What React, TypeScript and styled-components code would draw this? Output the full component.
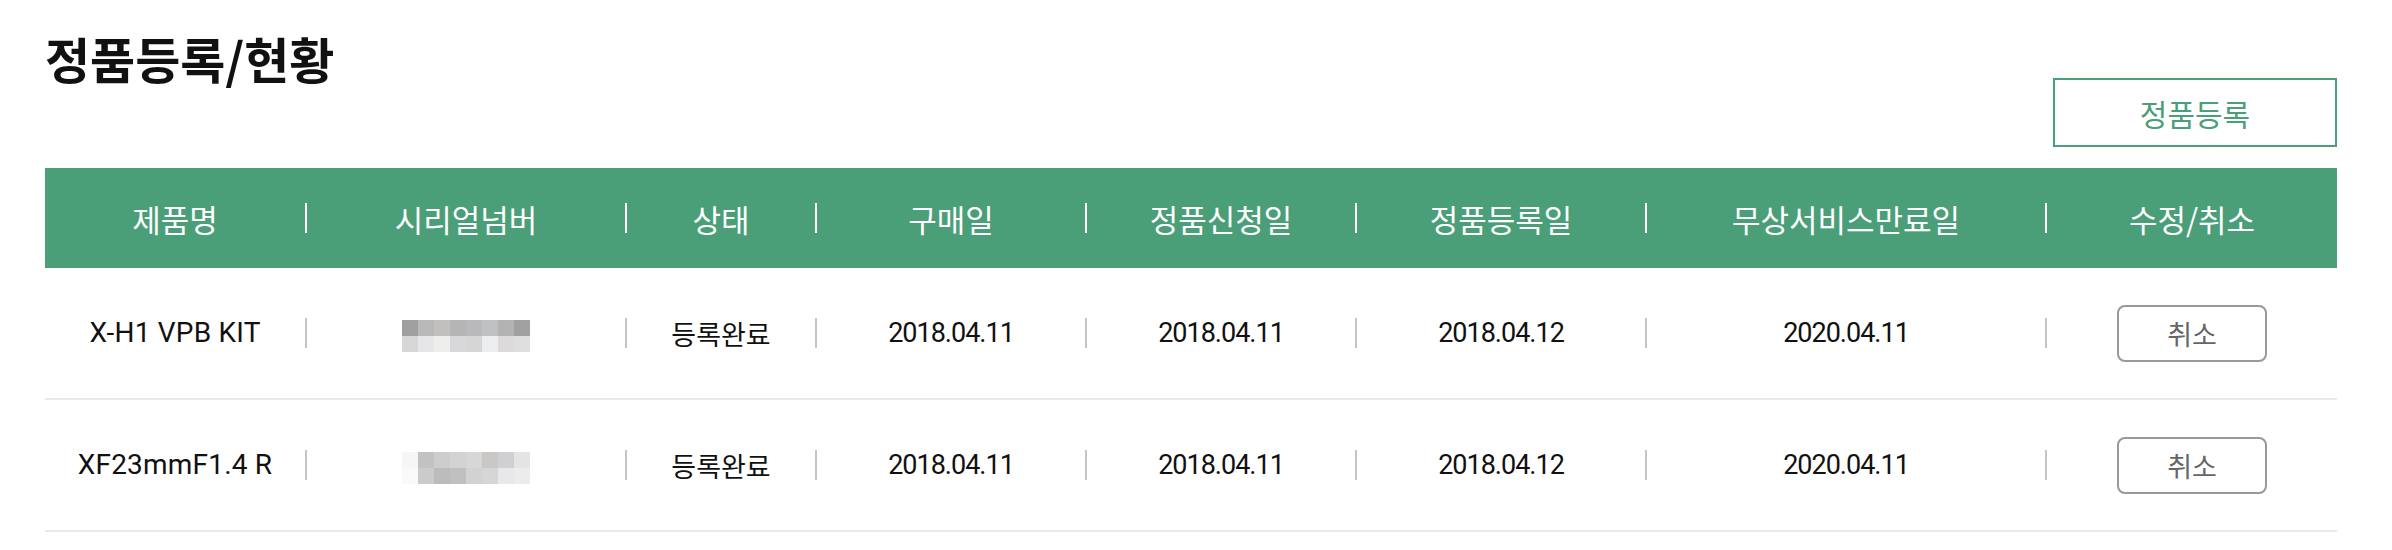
import React from "react";
import styled, { createGlobalStyle } from "styled-components";

const GREEN = "#4a9e78";
const COLS = "260px 320px 190px 270px 270px 290px 400px 292px";
const KR = `"Noto Sans CJK KR", sans-serif`;

const GlobalStyle = createGlobalStyle`
  html, body { margin: 0; padding: 0; background: #fff; }
  body { font-family: Roboto, "Noto Sans CJK KR", sans-serif; color: #111; }
  * { box-sizing: border-box; }
`;

const Page = styled.div`
  width: 2392px;
  padding: 0 55px 0 45px;
`;

const Head = styled.div`
  height: 168px;
  display: flex;
  justify-content: space-between;
  align-items: flex-start;
  padding: 33px 0 21px;
`;

const Title = styled.h2`
  margin: 0;
  font-family: ${KR};
  font-size: 49px;
  font-weight: 700;
  line-height: 1;
  color: #111;
`;

const RegisterButton = styled.button`
  align-self: flex-end;
  width: 284px;
  height: 69px;
  padding: 0;
  border: 2px solid ${GREEN};
  background: #fff;
  color: ${GREEN};
  font-family: ${KR};
  font-size: 30px;
  line-height: 1;
  cursor: pointer;
`;

const Row = styled.div<{ $head?: boolean }>`
  display: grid;
  grid-template-columns: ${COLS};
  height: ${(p) => (p.$head ? 100 : 132)}px;
  background: ${(p) => (p.$head ? GREEN : "#fff")};
  border-bottom: ${(p) => (p.$head ? "none" : "2px solid #e9e9e9")};
`;

const Cell = styled.div<{ $head?: boolean; $first?: boolean }>`
  display: flex;
  align-items: center;
  &::before {
    content: "";
    flex: none;
    width: ${(p) => (p.$first ? 0 : 2)}px;
    height: 30px;
    background: ${(p) => (p.$head ? "#ffffff" : "#c4c4c4")};
  }
`;

const CellContent = styled.div`
  flex: 1;
  display: flex;
  justify-content: center;
  align-items: center;
`;

const HeadLabel = styled.span`
  font-family: ${KR};
  font-size: 31px;
  line-height: 1;
  color: #fff;
`;

const DateText = styled.span`
  font-family: Roboto, sans-serif;
  font-size: 27px;
  letter-spacing: -1px;
  line-height: 1;
  color: #111;
`;

const NameText = styled.span`
  font-family: Roboto, sans-serif;
  font-size: 28px;
  letter-spacing: 0.2px;
  line-height: 1;
  color: #111;
`;

const StatusText = styled.span`
  font-family: ${KR};
  font-size: 27px;
  line-height: 1;
  color: #111;
`;

const Mosaic = styled.div`
  display: grid;
  grid-template-columns: repeat(8, 16px);
  grid-auto-rows: 16px;
  margin-top: 6px;
`;

const Pixel = styled.span<{ $c: string }>`
  background: ${(p) => p.$c};
`;

const CancelButton = styled.button`
  width: 150px;
  height: 57px;
  padding: 0;
  border: 2px solid #999;
  border-radius: 8px;
  background: #fff;
  color: #666;
  font-family: ${KR};
  font-size: 27px;
  line-height: 1;
  cursor: pointer;
`;

const headers = [
  "제품명",
  "시리얼넘버",
  "상태",
  "구매일",
  "정품신청일",
  "정품등록일",
  "무상서비스만료일",
  "수정/취소",
];

const rows = [
  {
    name: "X-H1 VPB KIT",
    serial: [
      "#a09fa0", "#b9b9b9", "#c1c0be", "#b5b5b5", "#b9b9bb", "#c0c1c3", "#b3b3b3", "#a1a1a1",
      "#d7d7d7", "#e6e6e8", "#eeeeec", "#d8d8dc", "#d6d6d6", "#eceef0", "#dcdadb", "#dedede",
    ],
    status: "등록완료",
    buy: "2018.04.11",
    apply: "2018.04.11",
    reg: "2018.04.12",
    expire: "2020.04.11",
  },
  {
    name: "XF23mmF1.4 R",
    serial: [
      "#f6f6f6", "#c2c2c2", "#cdcdcd", "#d3d3d3", "#d7d7d7", "#c9c8c6", "#ced0d3", "#e4e4e4",
      "#f9f9f9", "#cbcbcb", "#bcbcbc", "#c0c0c0", "#d2d2d2", "#d6d6d6", "#e8e8ea", "#ececec",
    ],
    status: "등록완료",
    buy: "2018.04.11",
    apply: "2018.04.11",
    reg: "2018.04.12",
    expire: "2020.04.11",
  },
];

export default function App() {
  return (
    <>
      <GlobalStyle />
      <Page>
        <Head>
          <Title>정품등록/현황</Title>
          <RegisterButton>정품등록</RegisterButton>
        </Head>
        <Row $head>
          {headers.map((h, i) => (
            <Cell key={h} $head $first={i === 0}>
              <CellContent>
                <HeadLabel>{h}</HeadLabel>
              </CellContent>
            </Cell>
          ))}
        </Row>
        {rows.map((r) => (
          <Row key={r.name}>
            <Cell $first>
              <CellContent>
                <NameText>{r.name}</NameText>
              </CellContent>
            </Cell>
            <Cell>
              <CellContent>
                <Mosaic>
                  {r.serial.map((c, i) => (
                    <Pixel key={i} $c={c} />
                  ))}
                </Mosaic>
              </CellContent>
            </Cell>
            <Cell>
              <CellContent>
                <StatusText>{r.status}</StatusText>
              </CellContent>
            </Cell>
            <Cell>
              <CellContent>
                <DateText>{r.buy}</DateText>
              </CellContent>
            </Cell>
            <Cell>
              <CellContent>
                <DateText>{r.apply}</DateText>
              </CellContent>
            </Cell>
            <Cell>
              <CellContent>
                <DateText>{r.reg}</DateText>
              </CellContent>
            </Cell>
            <Cell>
              <CellContent>
                <DateText>{r.expire}</DateText>
              </CellContent>
            </Cell>
            <Cell>
              <CellContent>
                <CancelButton>취소</CancelButton>
              </CellContent>
            </Cell>
          </Row>
        ))}
      </Page>
    </>
  );
}
